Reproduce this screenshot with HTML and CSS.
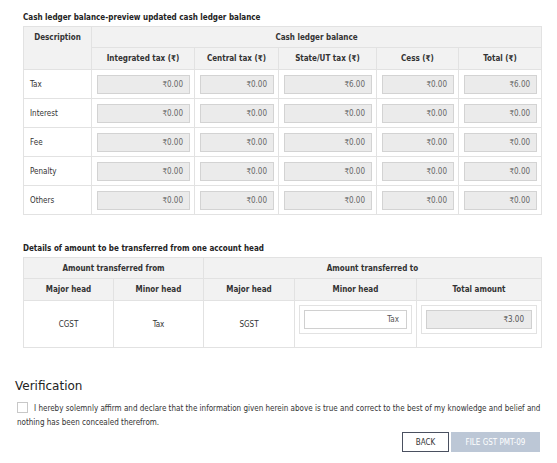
FILE: index.html
```html
<!DOCTYPE html>
<html>
<head>
<meta charset="utf-8">
<link rel="stylesheet" href="styles.css">
</head>
<body>
<div class="page">
  <section class="block first">
    <h4 class="sec-title">Cash ledger balance-preview updated cash ledger balance</h4>
    <table class="grid ledger">
      <colgroup><col class="c1"><col class="c2"><col class="c3"><col class="c4"><col class="c5"><col class="c6"></colgroup>
      <thead>
        <tr class="h1"><th rowspan="2" class="top">Description</th><th colspan="5">Cash ledger balance</th></tr>
        <tr class="h2"><th>Integrated tax (₹)</th><th>Central tax (₹)</th><th>State/UT tax (₹)</th><th>Cess (₹)</th><th>Total (₹)</th></tr>
      </thead>
      <tbody>
        <tr><td class="lbl">Tax</td><td><div class="amt">₹0.00</div></td><td><div class="amt">₹0.00</div></td><td><div class="amt">₹6.00</div></td><td><div class="amt">₹0.00</div></td><td><div class="amt">₹6.00</div></td></tr>
        <tr><td class="lbl">Interest</td><td><div class="amt">₹0.00</div></td><td><div class="amt">₹0.00</div></td><td><div class="amt">₹0.00</div></td><td><div class="amt">₹0.00</div></td><td><div class="amt">₹0.00</div></td></tr>
        <tr><td class="lbl">Fee</td><td><div class="amt">₹0.00</div></td><td><div class="amt">₹0.00</div></td><td><div class="amt">₹0.00</div></td><td><div class="amt">₹0.00</div></td><td><div class="amt">₹0.00</div></td></tr>
        <tr><td class="lbl">Penalty</td><td><div class="amt">₹0.00</div></td><td><div class="amt">₹0.00</div></td><td><div class="amt">₹0.00</div></td><td><div class="amt">₹0.00</div></td><td><div class="amt">₹0.00</div></td></tr>
        <tr><td class="lbl">Others</td><td><div class="amt">₹0.00</div></td><td><div class="amt">₹0.00</div></td><td><div class="amt">₹0.00</div></td><td><div class="amt">₹0.00</div></td><td><div class="amt">₹0.00</div></td></tr>
      </tbody>
    </table>
  </section>

  <section class="block second">
    <h4 class="sec-title">Details of amount to be transferred from one account head</h4>
    <table class="grid transfer">
      <colgroup><col class="t1"><col class="t2"><col class="t3"><col class="t4"><col class="t5"></colgroup>
      <thead>
        <tr class="h1"><th colspan="2">Amount transferred from</th><th colspan="3">Amount transferred to</th></tr>
        <tr class="h2"><th>Major head</th><th>Minor head</th><th>Major head</th><th>Minor head</th><th>Total amount</th></tr>
      </thead>
      <tbody>
        <tr class="trow">
          <td class="ctr">CGST</td>
          <td class="ctr">Tax</td>
          <td class="ctr">SGST</td>
          <td class="boxcell"><div class="wrap"><div class="field">Tax</div></div></td>
          <td class="boxcell"><div class="wrap"><div class="field grey">₹3.00</div></div></td>
        </tr>
      </tbody>
    </table>
  </section>

  <section class="verify">
    <h3 class="v-title">Verification</h3>
    <p class="v-text"><span class="chk"></span>I hereby solemnly affirm and declare that the information given herein above is true and correct to the best of my knowledge and belief and nothing has been concealed therefrom.</p>
    <div class="actions">
      <button class="btn back">BACK</button>
      <button class="btn file">FILE GST PMT-09</button>
    </div>
  </section>
</div>
</body>
</html>
```

FILE: styles.css
```css
html, body {
  margin: 0;
  padding: 0;
  background: #fff;
}
body {
  font-family: "DejaVu Sans Condensed", "DejaVu Sans", Verdana, sans-serif;
  font-size: 8px;
  color: #333;
  width: 557px;
  height: 463px;
  overflow: hidden;
}
.page {
  padding: 0 16px 0 15px;
}
.block {
  padding-left: 8px;
}
.block.first {
  padding-top: 13px;
}
.block.second {
  padding-top: 29px;
}
.sec-title {
  margin: 0 0 3px 0;
  font-size: 8px;
  font-weight: bold;
  color: #222;
  line-height: 10px;
}
.grid {
  width: 518px;
  border-collapse: collapse;
  table-layout: fixed;
  border: 1px solid #e2e2e2;
}
.grid th, .grid td {
  border: 1px solid #e2e2e2;
  padding: 0;
}
.grid th {
  background: #f2f2f2;
  font-weight: bold;
  color: #333;
  font-size: 8px;
  text-align: center;
}
.grid .h1 th { height: 20px; }
.grid .h2 th { height: 21px; }
.grid th.top { vertical-align: top; padding-top: 6px; }
.ledger .c1 { width: 68px; }
.ledger .c2 { width: 103px; }
.ledger .c3 { width: 84px; }
.ledger .c4 { width: 98px; }
.ledger .c5 { width: 82px; }
.ledger .c6 { width: 83px; }
.ledger td {
  height: 28px;
  padding: 0 4px 0 5px;
}
.ledger td.lbl {
  padding-left: 6px;
}
.amt {
  height: 17px;
  line-height: 17px;
  background: #ebebeb;
  border: 1px solid #d3d3d3;
  text-align: right;
  padding-right: 6px;
  color: #666;
}
.transfer .t1 { width: 90px; }
.transfer .t2 { width: 90px; }
.transfer .t3 { width: 91px; }
.transfer .t4 { width: 122px; }
.transfer .t5 { width: 125px; }
.transfer td {
  height: 42px;
}
.transfer td.ctr {
  text-align: center;
  vertical-align: middle;
}
.transfer td.boxcell {
  vertical-align: top;
  padding: 4px 4px 0 4px;
}
.wrap {
  border: 1px solid #e2e2e2;
  padding: 4px;
}
.field {
  height: 17px;
  line-height: 17px;
  border: 1px solid #d0d0d0;
  background: #fff;
  text-align: right;
  padding-right: 7px;
  color: #555;
}
.field.grey {
  background: #ebebeb;
}
.verify {
  padding-top: 30px;
}
.v-title {
  margin: 0;
  font-family: "DejaVu Sans", Verdana, sans-serif;
  font-size: 12px;
  font-weight: normal;
  color: #222;
  line-height: 16px;
}
.v-text {
  margin: 8px 0 0 2px;
  line-height: 14px;
  color: #333;
}
.chk {
  display: inline-block;
  width: 9px;
  height: 9px;
  border: 1px solid #c8c8c8;
  vertical-align: -2px;
  margin-right: 6px;
  background: #fff;
}
.actions {
  display: flex;
  justify-content: flex-end;
  gap: 2px;
  margin-top: 2px;
  margin-right: 1px;
}
.btn {
  font-family: "DejaVu Sans Condensed", "DejaVu Sans", Verdana, sans-serif;
  font-size: 8px;
  height: 20px;
  padding: 0;
  cursor: pointer;
}
.btn.back {
  width: 47px;
  background: #fff;
  border: 1px solid #4a5060;
  color: #333;
}
.btn.file {
  width: 89px;
  background: #bcc7d6;
  border: 1px solid #bcc7d6;
  color: #fff;
}
```
